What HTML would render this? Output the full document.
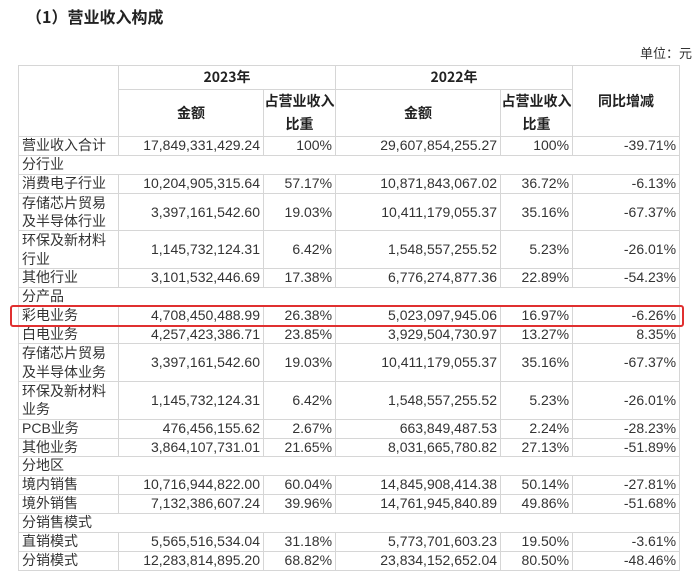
<!DOCTYPE html>
<html><head><meta charset="utf-8"><style>
body{margin:0;width:700px;height:575px;background:#fff;overflow:hidden;font-family:"Liberation Sans","Noto Sans CJK SC",sans-serif;color:#333;position:relative}
h1{position:absolute;left:26px;top:4px;margin:0;font-size:16px;font-weight:bold;color:#222;font-family:"Noto Sans CJK SC",sans-serif;line-height:24px}
.unit{position:absolute;right:8px;top:44px;font-size:13px;font-family:"Noto Sans CJK SC",sans-serif;line-height:18px}
table{position:absolute;left:18px;top:65px;border-collapse:collapse;table-layout:fixed;width:661px;font-size:14px}
td{border:1px solid #d6d6d6;padding:0;white-space:nowrap;overflow:hidden;color:#333;vertical-align:middle}
td div{overflow:hidden;padding:0 3px}
tr.s td div{height:17.9px;line-height:17.9px}
tr.d td div{height:36.6px;line-height:18.3px}
tr.d td.r div{line-height:36.6px}
td.r{text-align:right}
th{border:1px solid #d6d6d6;font-weight:bold;font-size:14px;color:#222;font-family:"Noto Sans CJK SC",sans-serif;padding:0;white-space:nowrap}
th div{overflow:hidden}
.box{position:absolute;left:10px;top:305px;width:670px;height:18px;border:2px solid #e03030;border-radius:3px}
</style></head><body>
<h1>（1）营业收入构成</h1>
<div class="unit">单位：元</div>
<table>
<colgroup><col style="width:100px"><col style="width:145px"><col style="width:72px"><col style="width:165px"><col style="width:72px"><col style="width:107px"></colgroup>
<tr><th rowspan="2"></th><th colspan="2"><div style="height:23px;line-height:23px">2023年</div></th><th colspan="2"><div style="height:23px;line-height:23px">2022年</div></th><th rowspan="2">同比增减</th></tr>
<tr><th><div style="height:46px;line-height:46px">金额</div></th><th><div style="height:46px;line-height:23px">占营业收入<br>比重</div></th><th><div style="height:46px;line-height:46px">金额</div></th><th><div style="height:46px;line-height:23px">占营业收入<br>比重</div></th></tr>
<tr class="s"><td><div>营业收入合计</div></td><td class="r"><div>17,849,331,429.24</div></td><td class="r"><div>100%</div></td><td class="r"><div>29,607,854,255.27</div></td><td class="r"><div>100%</div></td><td class="r"><div>-39.71%</div></td></tr>
<tr class="s"><td colspan="6"><div>分行业</div></td></tr>
<tr class="s"><td><div>消费电子行业</div></td><td class="r"><div>10,204,905,315.64</div></td><td class="r"><div>57.17%</div></td><td class="r"><div>10,871,843,067.02</div></td><td class="r"><div>36.72%</div></td><td class="r"><div>-6.13%</div></td></tr>
<tr class="d"><td><div>存储芯片贸易<br>及半导体行业</div></td><td class="r"><div>3,397,161,542.60</div></td><td class="r"><div>19.03%</div></td><td class="r"><div>10,411,179,055.37</div></td><td class="r"><div>35.16%</div></td><td class="r"><div>-67.37%</div></td></tr>
<tr class="d"><td><div>环保及新材料<br>行业</div></td><td class="r"><div>1,145,732,124.31</div></td><td class="r"><div>6.42%</div></td><td class="r"><div>1,548,557,255.52</div></td><td class="r"><div>5.23%</div></td><td class="r"><div>-26.01%</div></td></tr>
<tr class="s"><td><div>其他行业</div></td><td class="r"><div>3,101,532,446.69</div></td><td class="r"><div>17.38%</div></td><td class="r"><div>6,776,274,877.36</div></td><td class="r"><div>22.89%</div></td><td class="r"><div>-54.23%</div></td></tr>
<tr class="s"><td colspan="6"><div>分产品</div></td></tr>
<tr class="s"><td><div>彩电业务</div></td><td class="r"><div>4,708,450,488.99</div></td><td class="r"><div>26.38%</div></td><td class="r"><div>5,023,097,945.06</div></td><td class="r"><div>16.97%</div></td><td class="r"><div>-6.26%</div></td></tr>
<tr class="s"><td><div>白电业务</div></td><td class="r"><div>4,257,423,386.71</div></td><td class="r"><div>23.85%</div></td><td class="r"><div>3,929,504,730.97</div></td><td class="r"><div>13.27%</div></td><td class="r"><div>8.35%</div></td></tr>
<tr class="d"><td><div>存储芯片贸易<br>及半导体业务</div></td><td class="r"><div>3,397,161,542.60</div></td><td class="r"><div>19.03%</div></td><td class="r"><div>10,411,179,055.37</div></td><td class="r"><div>35.16%</div></td><td class="r"><div>-67.37%</div></td></tr>
<tr class="d"><td><div>环保及新材料<br>业务</div></td><td class="r"><div>1,145,732,124.31</div></td><td class="r"><div>6.42%</div></td><td class="r"><div>1,548,557,255.52</div></td><td class="r"><div>5.23%</div></td><td class="r"><div>-26.01%</div></td></tr>
<tr class="s"><td><div>PCB业务</div></td><td class="r"><div>476,456,155.62</div></td><td class="r"><div>2.67%</div></td><td class="r"><div>663,849,487.53</div></td><td class="r"><div>2.24%</div></td><td class="r"><div>-28.23%</div></td></tr>
<tr class="s"><td><div>其他业务</div></td><td class="r"><div>3,864,107,731.01</div></td><td class="r"><div>21.65%</div></td><td class="r"><div>8,031,665,780.82</div></td><td class="r"><div>27.13%</div></td><td class="r"><div>-51.89%</div></td></tr>
<tr class="s"><td colspan="6"><div>分地区</div></td></tr>
<tr class="s"><td><div>境内销售</div></td><td class="r"><div>10,716,944,822.00</div></td><td class="r"><div>60.04%</div></td><td class="r"><div>14,845,908,414.38</div></td><td class="r"><div>50.14%</div></td><td class="r"><div>-27.81%</div></td></tr>
<tr class="s"><td><div>境外销售</div></td><td class="r"><div>7,132,386,607.24</div></td><td class="r"><div>39.96%</div></td><td class="r"><div>14,761,945,840.89</div></td><td class="r"><div>49.86%</div></td><td class="r"><div>-51.68%</div></td></tr>
<tr class="s"><td colspan="6"><div>分销售模式</div></td></tr>
<tr class="s"><td><div>直销模式</div></td><td class="r"><div>5,565,516,534.04</div></td><td class="r"><div>31.18%</div></td><td class="r"><div>5,773,701,603.23</div></td><td class="r"><div>19.50%</div></td><td class="r"><div>-3.61%</div></td></tr>
<tr class="s"><td><div>分销模式</div></td><td class="r"><div>12,283,814,895.20</div></td><td class="r"><div>68.82%</div></td><td class="r"><div>23,834,152,652.04</div></td><td class="r"><div>80.50%</div></td><td class="r"><div>-48.46%</div></td></tr>
</table>
<div class="box"></div>
</body></html>
